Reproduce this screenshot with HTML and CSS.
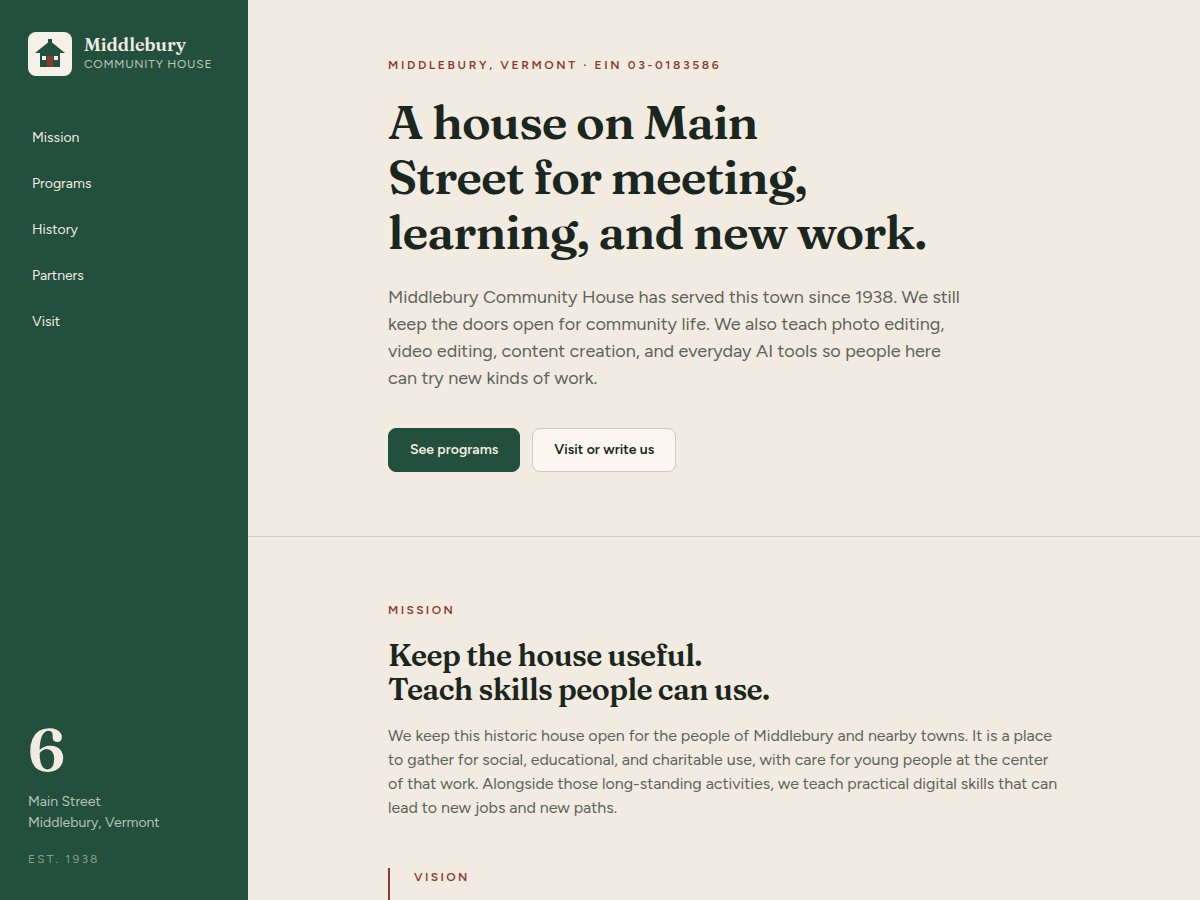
FILE: index.html
```html
<!DOCTYPE html>
<html lang="en">
<head>
  <meta charset="UTF-8" />
  <meta name="viewport" content="width=device-width, initial-scale=1" />
  <title>Middlebury Community House</title>
  <link rel="stylesheet" href="styles.css">
</head>
<body>
  <aside class="sidebar">
    <a class="brand" href="#top">
      <svg class="brand-mark" viewBox="0 0 44 44" aria-hidden="true">
        <rect width="44" height="44" rx="8" fill="#f5f0e8"/>
        <path d="M20 7h4v3.5L37 21H7L20 10.500z" fill="#234f3e"/>
        <path d="M12 20h20v15H12z" fill="#234f3e"/>
        <path d="M14 24h4v4h-4zM26 24h4v4h-4z" fill="#f5f0e8"/>
        <path d="M19 24h6v11h-6z" fill="#8b3a2f"/>
      </svg>
      <span class="brand-text">
        <span class="brand-name">Middlebury</span>
        <span class="brand-sub">Community House</span>
      </span>
    </a>

    <nav class="nav" aria-label="Main">
      <a href="#mission">Mission</a>
      <a href="#programs">Programs</a>
      <a href="#history">History</a>
      <a href="#partners">Partners</a>
      <a href="#visit">Visit</a>
    </nav>

    <div class="address">
      <div class="address-number">6</div>
      <p class="address-street">Main Street<br>Middlebury, Vermont</p>
      <p class="address-est">Est. 1938</p>
    </div>
  </aside>

  <main class="content" id="top">
    <!-- Hero -->
    <section class="hero">
      <div class="inner">
        <p class="eyebrow">Middlebury, Vermont · EIN 03-0183586</p>
        <h1>A house on Main<br>Street for meeting,<br>learning, and new work.</h1>
        <p class="lead">Middlebury Community House has served this town since 1938. We still<br>
          keep the doors open for community life. We also teach photo editing,<br>
          video editing, content creation, and everyday AI tools so people here<br>
          can try new kinds of work.</p>
        <div class="actions">
          <a class="btn btn-primary" href="#programs">See programs</a>
          <a class="btn btn-secondary" href="#visit">Visit or write us</a>
        </div>
      </div>
    </section>

    <!-- Mission -->
    <section class="mission" id="mission">
      <div class="inner">
        <p class="eyebrow">Mission</p>
        <h2>Keep the house useful.<br>Teach skills people can use.</h2>
        <p class="copy">We keep this historic house open for the people of Middlebury and nearby towns. It is a place<br>
          to gather for social, educational, and charitable use, with care for young people at the center<br>
          of that work. Alongside those long-standing activities, we teach practical digital skills that can<br>
          lead to new jobs and new paths.</p>
        <div class="vision">
          <p class="eyebrow">Vision</p>
        </div>
      </div>
    </section>
  </main>
</body>
</html>
```
FILE: styles.css
```css
* {
  box-sizing: border-box;
}

body {
  margin: 0;
  display: flex;
  align-items: flex-start;
  background-color: #f2ebe1;
  color: #1a2620;
  font-family: Figtree, Lato, sans-serif;
  font-size: 16px;
}

p, h1, h2 {
  margin: 0;
}

a {
  color: inherit;
  text-decoration: none;
}

.sidebar {
  position: sticky;
  top: 0;
  flex: none;
  display: flex;
  flex-direction: column;
  width: 248px;
  height: 100vh;
  padding: 32px 28px;
  background-color: #234f3e;
  color: #f2ebe1;
}

.brand {
  display: flex;
  align-items: center;
  gap: 12px;
}

.brand-mark {
  width: 44px;
  height: 44px;
}

.brand-text {
  display: flex;
  flex-direction: column;
  white-space: nowrap;
}

.brand-name {
  font-family: Fraunces, "Liberation Serif", serif;
  font-size: 18px;
  font-weight: 600;
  line-height: 20px;
}

.brand-sub {
  font-size: 12px;
  line-height: 18px;
  letter-spacing: 0.06em;
  text-transform: uppercase;
  color: #b9c7b9;
}

.nav {
  display: flex;
  flex-direction: column;
  gap: 2px;
  margin-top: 40px;
}

.nav a {
  padding: 11px 4px;
  font-size: 14px;
  line-height: 22px;
}

.address {
  margin-top: auto;
}

.address-number {
  font-family: Fraunces, "Liberation Serif", serif;
  font-size: 60px;
  font-weight: 550;
  line-height: 60px;
}

.address-street {
  margin-top: 12px;
  font-size: 14px;
  line-height: 21px;
  color: #b5c3b7;
}

.address-est {
  margin-top: 17px;
  font-size: 12px;
  line-height: 18px;
  letter-spacing: 0.18em;
  text-transform: uppercase;
  color: #869e8e;
}

.content {
  flex: 1;
  min-width: 0;
}

.inner {
  max-width: 672px;
  margin: 0 auto;
}

.hero {
  padding: 56px 0 64px;
  border-bottom: 1px solid #d5c9bf;
}

.eyebrow {
  font-size: 12px;
  font-weight: 600;
  line-height: 18px;
  letter-spacing: 0.2em;
  text-transform: uppercase;
  color: #8b3a2f;
}

.hero .eyebrow {
  letter-spacing: 0.22em;
}

h1, h2 {
  font-family: Fraunces, "Liberation Serif", serif;
  font-weight: 550;
  letter-spacing: -0.02em;
}

h1 {
  margin-top: 20px;
  font-size: 48px;
  line-height: 55px;
}

.lead {
  margin-top: 25px;
  font-size: 18px;
  line-height: 27px;
  color: #5c655c;
}

.actions {
  display: flex;
  gap: 12px;
  margin-top: 36px;
}

.btn {
  padding: 10px 21px;
  border: 1px solid transparent;
  border-radius: 8px;
  font-size: 14px;
  font-weight: 600;
  line-height: 22px;
}

.btn-primary {
  border-color: #234f3e;
  background-color: #234f3e;
  color: #f2ebe1;
}

.btn-secondary {
  background-color: #fbf6ef;
  border-color: #d5c9bf;
}

.mission {
  padding: 64px 0;
}

h2 {
  margin-top: 20px;
  font-size: 30px;
  line-height: 34px;
}

.copy {
  margin-top: 17px;
  font-size: 16px;
  line-height: 24px;
  color: #5c655c;
}

.vision {
  margin-top: 48px;
  padding: 0 24px 24px;
  border-left: 2px solid #8b3a2f;
}
```
